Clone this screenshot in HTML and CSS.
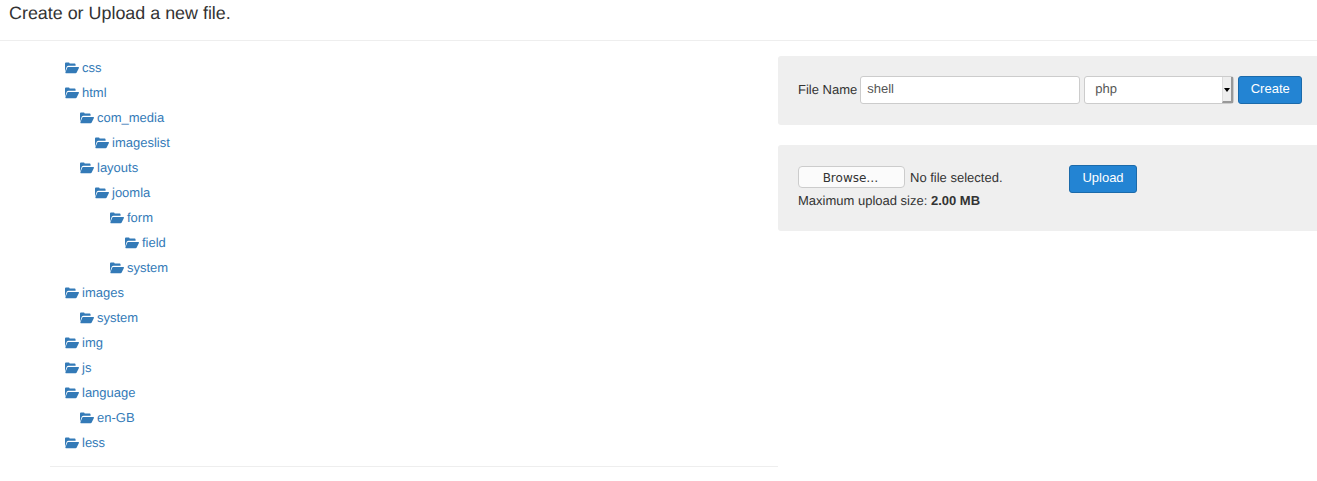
FILE: index.html
```html
<!DOCTYPE html>
<html>
<head>
    <meta charset="utf-8">
    <title>Create or Upload a new file</title>
    <link rel="stylesheet" href="styles.css">
</head>
<body>
    <svg class="defs" width="0" height="0">
      <symbol id="folder" viewBox="0 0 14 12">
        <path d="M0 10V1.6C0 .9.5.4 1.2.4h2.3c.7 0 1.1.5 1.2 1.2h4.7c.7 0 1.2.5 1.2 1.2v.9H3.6c-.9 0-1.5.4-1.9 1.1L0 10z"/>
        <path d="M3.1 5.1h10.3c.5 0 .7.4.5.8l-2.2 4.7c-.2.5-.6.7-1.1.7H.9c-.5 0-.7-.3-.5-.8l1.8-4.7c.2-.5.5-.7.9-.7z"/>
      </symbol>
    </svg>

    <h1 class="title">Create or Upload a new file.</h1>

    <div class="main">
      <div class="tree">
        <a class="node"><svg class="ico"><use href="#folder"/></svg>css</a>
        <a class="node"><svg class="ico"><use href="#folder"/></svg>html</a>
        <a class="node lv1"><svg class="ico"><use href="#folder"/></svg>com_media</a>
        <a class="node lv2"><svg class="ico"><use href="#folder"/></svg>imageslist</a>
        <a class="node lv1"><svg class="ico"><use href="#folder"/></svg>layouts</a>
        <a class="node lv2"><svg class="ico"><use href="#folder"/></svg>joomla</a>
        <a class="node lv3"><svg class="ico"><use href="#folder"/></svg>form</a>
        <a class="node lv4"><svg class="ico"><use href="#folder"/></svg>field</a>
        <a class="node lv3"><svg class="ico"><use href="#folder"/></svg>system</a>
        <a class="node"><svg class="ico"><use href="#folder"/></svg>images</a>
        <a class="node lv1"><svg class="ico"><use href="#folder"/></svg>system</a>
        <a class="node"><svg class="ico"><use href="#folder"/></svg>img</a>
        <a class="node"><svg class="ico"><use href="#folder"/></svg>js</a>
        <a class="node"><svg class="ico"><use href="#folder"/></svg>language</a>
        <a class="node lv1"><svg class="ico"><use href="#folder"/></svg>en-GB</a>
        <a class="node"><svg class="ico"><use href="#folder"/></svg>less</a>
      </div>

      <div class="side">
        <div class="well well-create">
          <label class="lbl">File Name</label>
          <input class="field name" type="text" value="shell">
          <span class="pick">
            <span class="pick-val">php</span>
            <span class="pick-arrow"></span>
          </span>
          <button class="btn btn-create">Create</button>
        </div>

        <div class="well well-upload">
          <div class="upload-left">
            <div class="file-row">
              <button class="browse">Browse…</button>
              <span class="file-none">No file selected.</span>
            </div>
            <div class="max">Maximum upload size: <b>2.00 MB</b></div>
          </div>
          <button class="btn btn-upload">Upload</button>
        </div>
      </div>
    </div>
</body>
</html>
```

FILE: styles.css
```css
* {
    box-sizing: border-box;
}

body {
    margin: 0;
    color: #333;
    background-color: #fff;
    font-family: "Liberation Sans", Arial, sans-serif;
    font-size: 13px;
    line-height: 18px;
    text-rendering: geometricPrecision;
}

.defs {
    display: block;
    height: 0;
}

.title {
    margin: 0;
    height: 41px;
    padding: 3px 9px 0;
    border-bottom: 1px solid #eee;
    font-size: 17.9px;
    font-weight: normal;
    line-height: 20px;
}

.main {
    display: flex;
    align-items: flex-start;
    padding-left: 50px;
}

.tree {
    width: 728px;
    flex: none;
    padding: 14px 0 11px 15px;
    border-bottom: 1px solid #eee;
}

.node {
    display: flex;
    align-items: center;
    height: 25px;
    color: #337ab7;
}

.lv1 { padding-left: 15px; }
.lv2 { padding-left: 30px; }
.lv3 { padding-left: 45px; }
.lv4 { padding-left: 60px; }

.ico {
    width: 14px;
    height: 12px;
    margin-right: 3px;
    fill: #337ab7;
    flex: none;
}

.side {
    flex: 1;
    min-width: 0;
    padding-top: 15px;
}

.well {
    display: flex;
    padding: 20px;
    background-color: #efefef;
    border-radius: 3px 0 0 3px;
}

.well-create {
    height: 69px;
    align-items: flex-start;
    margin-bottom: 20px;
}

.well-upload {
    height: 86px;
}

.lbl {
    flex: none;
    line-height: 28px;
    margin-right: 3px;
    white-space: nowrap;
}

.field {
    height: 28px;
    padding: 0 6px;
    border: 1px solid #ccc;
    border-radius: 3px;
    background: #fff;
    color: #555;
    font: 13px/22px "Liberation Sans", Arial, sans-serif;
}

.name {
    flex: none;
    width: 220px;
    padding-bottom: 3px;
    margin-right: 4px;
}

.pick {
    position: relative;
    display: block;
    flex: none;
    width: 150px;
    height: 28px;
    margin-right: 4px;
    padding-left: 10px;
    border: 1px solid #ccc;
    border-radius: 3px;
    background: #fff;
    color: #555;
    font-size: 13px;
    line-height: 23px;
}

.pick-arrow {
    position: absolute;
    top: 0;
    right: 0;
    bottom: 0;
    width: 11px;
    background: #eee;
    border-left: 1px solid #ddd;
    border-right: 2px solid #999;
    border-bottom: 2px solid #999;
}

.pick-arrow::after {
    content: "";
    position: absolute;
    top: 11px;
    left: 1px;
    border: 3px solid transparent;
    border-top: 4px solid #000;
    border-bottom: 0;
}

.btn {
    flex: none;
    height: 28px;
    padding: 0 0 2px;
    border: 1px solid #1b6aaa;
    border-radius: 3px;
    background: #2384d3;
    color: #fff;
    font: 13px/18px "Liberation Sans", Arial, sans-serif;
}

.btn-create {
    width: 64px;
}

.btn-upload {
    width: 68px;
}

.upload-left {
    width: 271px;
    margin-top: 1px;
}

.file-row {
    display: flex;
    align-items: center;
    height: 22px;
    gap: 5px;
}

.browse {
    width: 107px;
    height: 22px;
    padding: 1px 2px 0 0;
    border: 1px solid #ccc;
    border-radius: 4px;
    background: #fbfbfb;
    color: #333;
    font: 12px "DejaVu Sans", sans-serif;
}

.file-none {
    padding-top: 2px;
}

.max {
    margin-top: 4px;
}
```
